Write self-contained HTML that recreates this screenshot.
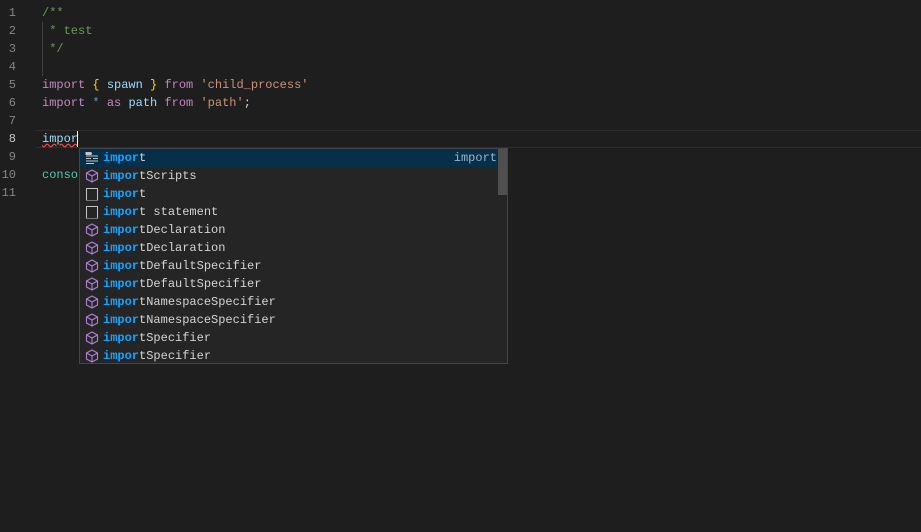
<!DOCTYPE html>
<html><head><style>
html,body{margin:0;padding:0;width:921px;height:532px;background:#1e1e1e;overflow:hidden}
body{position:relative;font-family:"Liberation Mono",monospace;font-size:12px}
.ln{position:absolute;left:0;width:16px;text-align:right;color:#858585;line-height:18px}
.code{position:absolute;left:42px;line-height:18px;white-space:pre;color:#d4d4d4}
.kw{color:#c586c0}.str{color:#ce9178}.cm{color:#6a9955}.var{color:#9cdcfe}.br{color:#ffd700}.op{color:#569cd6}.cl{color:#4ec9b0}
.hl{position:absolute;left:36px;right:0;top:130px;height:16px;border-top:1px solid #2e2e2e;border-bottom:1px solid #2e2e2e}
.guide{position:absolute;left:42px;top:22px;width:1px;height:54px;background:#404040}
.sw{position:absolute;left:79px;top:148px;width:427px;height:214px;background:#252526;border:1px solid #454545}
.row{position:absolute;left:0;width:417px;height:18px;line-height:18px;color:#d4d4d4}
.row.sel{background:#062f4a}
.row .t{position:absolute;left:23px}
.m{color:#18a3ff;font-weight:bold}
.ic{position:absolute;left:5px;top:2px;width:14px;height:14px}
.sb{position:absolute;left:418px;top:0;width:9px;height:46px;background:#4f4f4f}
</style></head><body>
<div class="hl"></div>
<div class="guide"></div>
<div class="ln" style="top:4px">1</div>
<div class="ln" style="top:22px">2</div>
<div class="ln" style="top:40px">3</div>
<div class="ln" style="top:58px">4</div>
<div class="ln" style="top:76px">5</div>
<div class="ln" style="top:94px">6</div>
<div class="ln" style="top:112px">7</div>
<div class="ln" style="top:130px;color:#c6c6c6">8</div>
<div class="ln" style="top:148px">9</div>
<div class="ln" style="top:166px">10</div>
<div class="ln" style="top:184px">11</div>
<div class="code" style="top:4px"><span class="cm">/**</span></div>
<div class="code" style="top:22px"><span class="cm"> * test</span></div>
<div class="code" style="top:40px"><span class="cm"> */</span></div>
<div class="code" style="top:76px"><span class="kw">import</span> <span class="br">{</span> <span class="var">spawn</span> <span class="br">}</span> <span class="kw">from</span> <span class="str">'child_process'</span></div>
<div class="code" style="top:94px"><span class="kw">import</span> <span class="op">*</span> <span class="kw">as</span> <span class="var">path</span> <span class="kw">from</span> <span class="str">'path'</span>;</div>
<div class="code" style="top:130px"><span class="var" style="text-decoration:underline wavy #f14c4c">impor</span></div>
<div style="position:absolute;left:77px;top:131px;width:1px;height:16px;background:#fff"></div>
<div class="code" style="top:166px"><span class="cl">conso</span></div>
<div class="sw">
<div class="row sel" style="top:0"><svg class="ic" viewBox="0 0 14 14" fill="none" stroke="#c5c5c5" stroke-width="1"><path d="M1 2.5h6M1 5h12M1 7.5h5M8 7.5h5M1 10h12M1 12.5h8"/><rect x="1" y="1.5" width="5" height="2"/></svg><span class="t"><span class="m">impor</span>t</span><span style="position:absolute;right:0;color:#9cb4c8">import</span></div>
<div class="row" style="top:18px"><svg class="ic" viewBox="0 0 14 14" fill="none" stroke="#b180d7" stroke-width="1.1"><path d="M7 1L12.5 4v6L7 13 1.5 10V4z M1.5 4L7 7l5.5-3 M7 7v6"/></svg><span class="t"><span class="m">impor</span>tScripts</span></div>
<div class="row" style="top:36px"><svg class="ic" viewBox="0 0 14 14" fill="none" stroke="#c5c5c5"><path d="M1.5 13V1.5h11V13" /><path d="M1.5 13.5h11" stroke-dasharray="1 1"/></svg><span class="t"><span class="m">impor</span>t</span></div>
<div class="row" style="top:54px"><svg class="ic" viewBox="0 0 14 14" fill="none" stroke="#c5c5c5"><path d="M1.5 13V1.5h11V13" /><path d="M1.5 13.5h11" stroke-dasharray="1 1"/></svg><span class="t"><span class="m">impor</span>t statement</span></div>
<div class="row" style="top:72px"><svg class="ic" viewBox="0 0 14 14" fill="none" stroke="#b180d7" stroke-width="1.1"><path d="M7 1L12.5 4v6L7 13 1.5 10V4z M1.5 4L7 7l5.5-3 M7 7v6"/></svg><span class="t"><span class="m">impor</span>tDeclaration</span></div>
<div class="row" style="top:90px"><svg class="ic" viewBox="0 0 14 14" fill="none" stroke="#b180d7" stroke-width="1.1"><path d="M7 1L12.5 4v6L7 13 1.5 10V4z M1.5 4L7 7l5.5-3 M7 7v6"/></svg><span class="t"><span class="m">impor</span>tDeclaration</span></div>
<div class="row" style="top:108px"><svg class="ic" viewBox="0 0 14 14" fill="none" stroke="#b180d7" stroke-width="1.1"><path d="M7 1L12.5 4v6L7 13 1.5 10V4z M1.5 4L7 7l5.5-3 M7 7v6"/></svg><span class="t"><span class="m">impor</span>tDefaultSpecifier</span></div>
<div class="row" style="top:126px"><svg class="ic" viewBox="0 0 14 14" fill="none" stroke="#b180d7" stroke-width="1.1"><path d="M7 1L12.5 4v6L7 13 1.5 10V4z M1.5 4L7 7l5.5-3 M7 7v6"/></svg><span class="t"><span class="m">impor</span>tDefaultSpecifier</span></div>
<div class="row" style="top:144px"><svg class="ic" viewBox="0 0 14 14" fill="none" stroke="#b180d7" stroke-width="1.1"><path d="M7 1L12.5 4v6L7 13 1.5 10V4z M1.5 4L7 7l5.5-3 M7 7v6"/></svg><span class="t"><span class="m">impor</span>tNamespaceSpecifier</span></div>
<div class="row" style="top:162px"><svg class="ic" viewBox="0 0 14 14" fill="none" stroke="#b180d7" stroke-width="1.1"><path d="M7 1L12.5 4v6L7 13 1.5 10V4z M1.5 4L7 7l5.5-3 M7 7v6"/></svg><span class="t"><span class="m">impor</span>tNamespaceSpecifier</span></div>
<div class="row" style="top:180px"><svg class="ic" viewBox="0 0 14 14" fill="none" stroke="#b180d7" stroke-width="1.1"><path d="M7 1L12.5 4v6L7 13 1.5 10V4z M1.5 4L7 7l5.5-3 M7 7v6"/></svg><span class="t"><span class="m">impor</span>tSpecifier</span></div>
<div class="row" style="top:198px"><svg class="ic" viewBox="0 0 14 14" fill="none" stroke="#b180d7" stroke-width="1.1"><path d="M7 1L12.5 4v6L7 13 1.5 10V4z M1.5 4L7 7l5.5-3 M7 7v6"/></svg><span class="t"><span class="m">impor</span>tSpecifier</span></div>
<div class="sb"></div>
</div>
</body></html>
